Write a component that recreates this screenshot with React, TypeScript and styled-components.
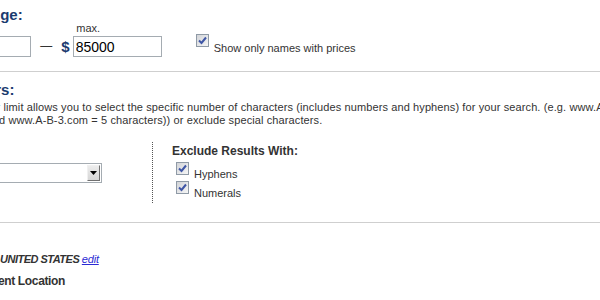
import * as React from 'react';
import styled, { createGlobalStyle } from 'styled-components';

const GlobalStyle = createGlobalStyle`
  html, body {
    margin: 0;
    padding: 0;
    background: #fff;
    overflow: hidden;
  }
  body {
    font-family: "Liberation Sans", Arial, sans-serif;
    color: #333;
  }
`;

type CheckProps = {
    label: string;
    drop: number;
    gap: number;
}

const CheckOption = ({ label, drop, gap }: CheckProps) => (
    <Option $gap={gap}>
        <Box>
            <svg width="9" height="9" viewBox="0 0 9 9">
                <path d="M1 4.5 L3.5 7 L8 1.5" fill="none" stroke="#3f56a6" strokeWidth="2" />
            </svg>
        </Box>
        <OptionText $drop={drop}>{label}</OptionText>
    </Option>
);

const App = () => {
    return (
        <>
            <GlobalStyle />
            <Page>
                <section>
                    <Heading>Price Range:</Heading>
                    <PriceRow>
                        <PriceField>
                            <FieldLabel>min.</FieldLabel>
                            <InputRow>
                                <Currency>$</Currency>
                                <PriceInput defaultValue="" />
                            </InputRow>
                        </PriceField>
                        <Dash>—</Dash>
                        <PriceField>
                            <FieldLabel>max.</FieldLabel>
                            <InputRow>
                                <Currency>$</Currency>
                                <PriceInput defaultValue="85000" />
                            </InputRow>
                        </PriceField>
                        <PriceCheck>
                            <CheckOption label="Show only names with prices" drop={8} gap={5} />
                        </PriceCheck>
                    </PriceRow>
                </section>

                <Rule />

                <Section>
                    <Heading>Characters:</Heading>
                    <Text>
                        The character limit allows you to select the specific number of characters (includes numbers and hyphens) for your search. (e.g. www.ABC.com = 3
                        <br />
                        characters and www.A-B-3.com = 5 characters)) or exclude special characters.
                    </Text>
                    <Columns>
                        <LeftCol>
                            <SelectBox>
                                <ArrowButton>
                                    <svg width="7" height="4" viewBox="0 0 7 4">
                                        <path d="M0 0 H7 L3.5 4 Z" fill="#000" />
                                    </svg>
                                </ArrowButton>
                            </SelectBox>
                        </LeftCol>
                        <RightCol>
                            <SubTitle>Exclude Results With:</SubTitle>
                            <Options>
                                <CheckOption label="Hyphens" drop={6} gap={5} />
                                <CheckOption label="Numerals" drop={6} gap={5} />
                            </Options>
                        </RightCol>
                    </Columns>
                </Section>

                <Rule $top={19} />

                <Section>
                    <Heading>Location:</Heading>
                    <LocationLine>
                        <Prefix>Search in:</Prefix>
                        UNITED STATES <EditLink href="#">edit</EditLink>
                    </LocationLine>
                    <RadioRow>
                        <Radio type="radio" name="loc" defaultChecked />
                        <SubTitle $tight>Current Location</SubTitle>
                    </RadioRow>
                </Section>
            </Page>
        </>
    )
}

export default App

const Page = styled.div`
  margin-left: -69px;
  padding-top: 8px;
`;
const Section = styled.section`
  margin-top: 11px;
`;
const Heading = styled.h2`
  margin: 0;
  font-size: 15px;
  line-height: 14px;
  font-weight: bold;
  color: #1b3b6f;
`;
const PriceRow = styled.div`
  display: flex;
  align-items: flex-end;
`;
const PriceField = styled.div`
  display: flex;
  flex-direction: column;
`;
const FieldLabel = styled.span`
  font-size: 11px;
  line-height: 12px;
  padding-left: 15px;
  margin-bottom: 2px;
  color: #333;
`;
const InputRow = styled.div`
  display: flex;
  align-items: center;
`;
const Currency = styled.span`
  font-size: 15px;
  font-weight: bold;
  color: #1b3b6f;
  margin-right: 3px;
`;
const PriceInput = styled.input`
  box-sizing: border-box;
  width: 89px;
  height: 21px;
  border: 1px solid #a5acb2;
  padding: 0 2px;
  font-family: "Liberation Sans", Arial, sans-serif;
  font-size: 14px;
  color: #000;
  outline: none;
`;
const Dash = styled.span`
  font-size: 12px;
  line-height: 21px;
  margin: 0 9px;
  color: #333;
`;
const PriceCheck = styled.div`
  margin-left: 34px;
  margin-bottom: 2px;
`;
const Option = styled.label<{ $gap: number }>`
  display: flex;
  align-items: flex-start;
  gap: ${p => p.$gap}px;
`;
const Box = styled.span`
  box-sizing: border-box;
  width: 13px;
  height: 13px;
  border: 1px solid #8f9aa6;
  background: linear-gradient(135deg, #d2d4d8, #f6f6f6);
  display: flex;
  align-items: center;
  justify-content: center;
`;
const OptionText = styled.span<{ $drop: number }>`
  padding-top: ${p => p.$drop}px;
  font-size: 11px;
  line-height: 13px;
  color: #333;
`;
const Rule = styled.hr<{ $top?: number }>`
  margin: ${p => p.$top ?? 14}px 0 0;
  border: 0;
  border-top: 1px solid #cfcfcf;
  height: 0;
`;
const Text = styled.p`
  margin: 4px 0 0;
  font-size: 11px;
  line-height: 13px;
  letter-spacing: 0.11px;
  color: #333;
  white-space: nowrap;
`;
const Columns = styled.div`
  display: flex;
  margin-top: 15px;
`;
const LeftCol = styled.div`
  width: 221px;
  padding-top: 21px;
`;
const SelectBox = styled.div`
  box-sizing: border-box;
  width: 171px;
  height: 20px;
  border: 1px solid #a5acb2;
  display: flex;
  justify-content: flex-end;
  align-items: center;
  padding-right: 1px;
`;
const ArrowButton = styled.span`
  box-sizing: border-box;
  width: 13px;
  height: 16px;
  border: 1px solid;
  border-color: #f0f0f0 #707070 #707070 #f0f0f0;
  background: linear-gradient(#ececec, #d6d6d6);
  display: flex;
  align-items: center;
  justify-content: center;
`;
const RightCol = styled.div`
  border-left: 1px dotted #555;
  padding: 2px 0 3px 19px;
`;
const SubTitle = styled.div<{ $tight?: boolean }>`
  font-size: 12px;
  line-height: 14px;
  font-weight: bold;
  letter-spacing: ${p => (p.$tight ? '-0.35px' : '0')};
  color: #333;
`;
const Options = styled.div`
  margin-top: 4px;
  padding-left: 4px;
`;
const LocationLine = styled.div`
  margin-top: 5px;
  font-size: 11px;
  line-height: 13px;
  font-weight: bold;
  font-style: italic;
  letter-spacing: -0.5px;
  color: #333;
`;
const Prefix = styled.span`
  display: inline-block;
  width: 69px;
  font-style: normal;
`;
const EditLink = styled.a`
  font-weight: normal;
  letter-spacing: -0.2px;
  color: #2a2ad4;
  text-decoration: underline;
`;
const RadioRow = styled.div`
  display: flex;
  align-items: center;
  gap: 10px;
  margin-top: 8px;
  padding-left: 20px;
`;
const Radio = styled.input`
  margin: 0;
  width: 13px;
  height: 13px;
`;
